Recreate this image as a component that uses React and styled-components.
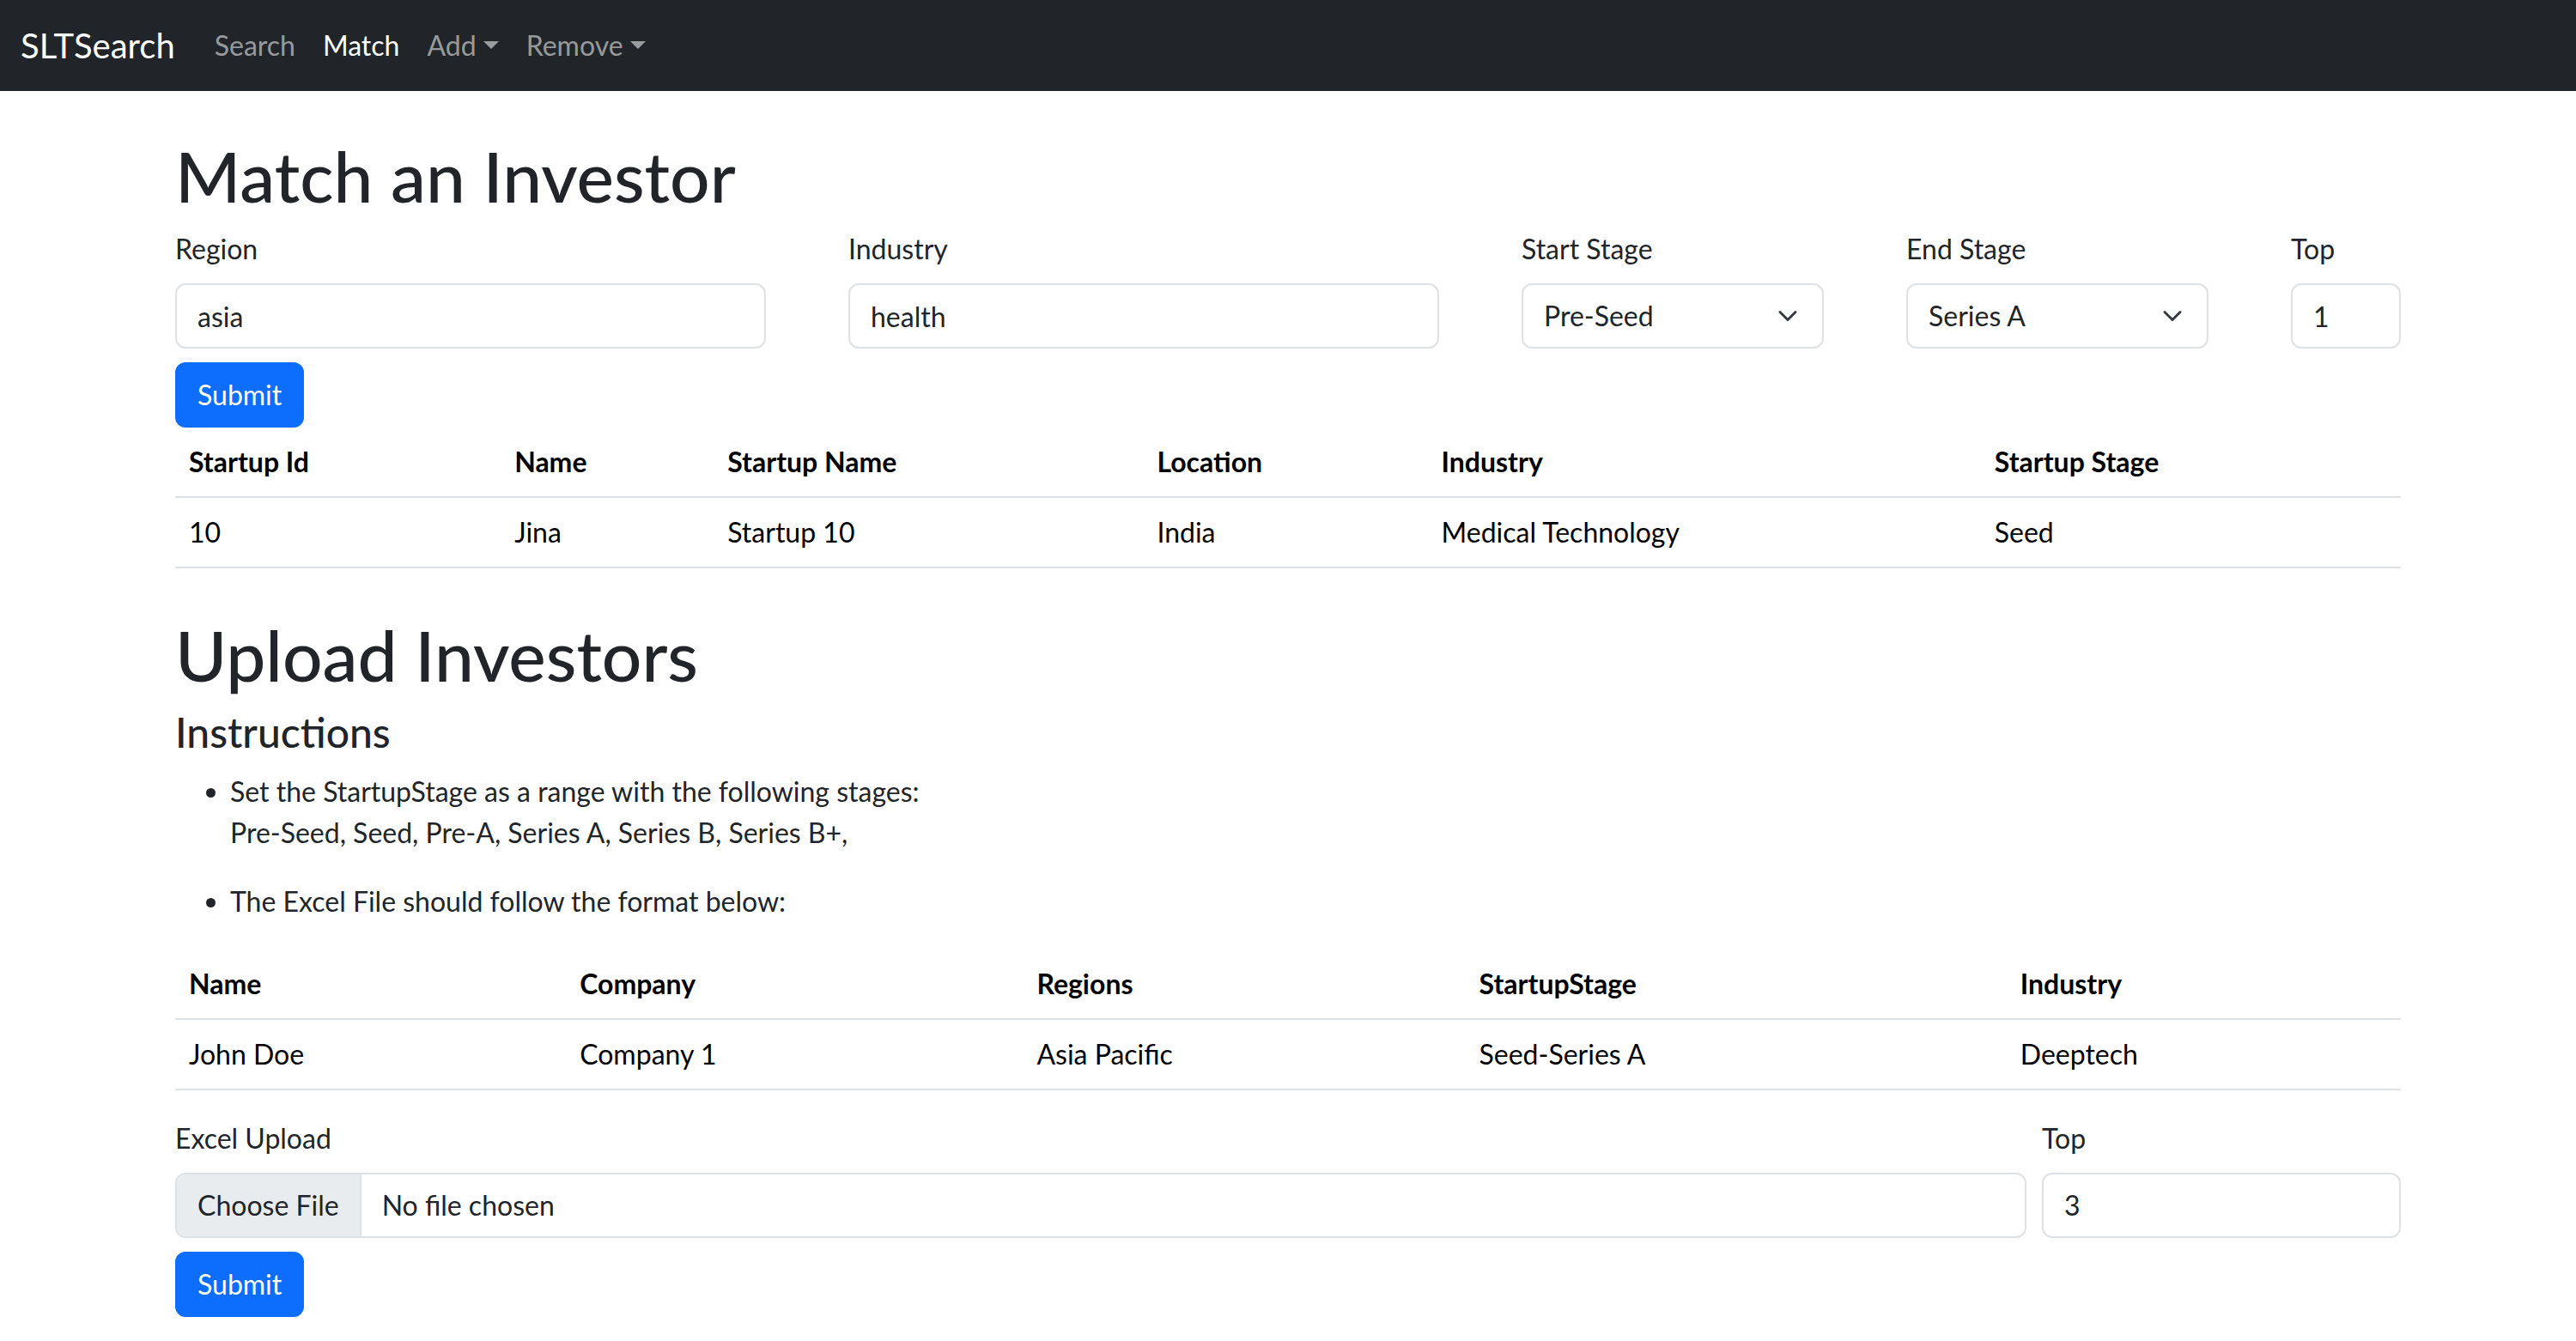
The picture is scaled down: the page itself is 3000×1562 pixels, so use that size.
import styled, { createGlobalStyle, css } from 'styled-components';

const GlobalStyle = createGlobalStyle`
  *, *::before, *::after {
    box-sizing: border-box;
  }

  body {
    margin: 0;
    font-family: Lato, 'Noto Sans', sans-serif;
    font-size: 32px;
    line-height: 1.5;
    color: #212529;
    background: #fff;
  }
`;

const Navbar = styled.nav`
  display: flex;
  align-items: center;
  height: 106px;
  padding: 0 24px;
  background: #212529;
`;

const Brand = styled.a`
  margin-right: 30px;
  font-size: 40px;
  color: #fff;
  text-decoration: none;
`;

const NavList = styled.ul`
  display: flex;
  margin: 0;
  padding: 0;
  list-style: none;
`;

const NavLink = styled.a`
  display: block;
  padding: 16px;
  color: ${(p) => (p.$active ? '#fff' : 'rgba(255, 255, 255, 0.55)')};
  text-decoration: none;

  ${(p) =>
    p.$dropdown &&
    css`
      &::after {
        content: '';
        display: inline-block;
        margin-left: 0.255em;
        vertical-align: 0.255em;
        border-top: 0.3em solid;
        border-right: 0.3em solid transparent;
        border-left: 0.3em solid transparent;
        border-bottom: 0;
      }
    `}
`;

const Container = styled.main`
  max-width: 2640px;
  margin: 0 auto;
  padding: 0 24px 64px;
`;

const Title = styled.h1`
  margin: ${(p) => p.$top}px 0 14px;
  font-size: 82px;
  font-weight: 500;
  line-height: 96px;
`;

const SubTitle = styled.h4`
  margin: 0 0 16px;
  font-size: 48px;
  font-weight: 500;
  line-height: 1.2;
`;

const FormRow = styled.div`
  display: grid;
  grid-template-columns: ${(p) => p.$cols};
  column-gap: ${(p) => p.$gap}px;
`;

const Label = styled.label`
  display: block;
  margin-bottom: 16px;
`;

const TextInput = styled.input`
  display: block;
  width: 100%;
  height: 76px;
  padding: 12px 24px;
  font: inherit;
  color: #212529;
  background: #fff;
  border: 2px solid #dee2e6;
  border-radius: 12px;
  outline: none;
`;

const SelectBox = styled.div`
  display: flex;
  align-items: center;
  height: 76px;
  padding: 0 24px;
  background: #fff;
  border: 2px solid #dee2e6;
  border-radius: 12px;
`;

const NativeSelect = styled.select`
  flex: 1;
  padding: 0;
  font: inherit;
  color: #212529;
  background: transparent;
  border: 0;
  outline: none;
  appearance: none;
`;

const SubmitButton = styled.button`
  display: inline-block;
  margin-top: 16px;
  padding: 12px 24px;
  font: inherit;
  line-height: 48px;
  color: #fff;
  background: #0d6efd;
  border: 2px solid #0d6efd;
  border-radius: 12px;
`;

const Table = styled.table`
  width: 100%;
  margin-bottom: 32px;
  table-layout: fixed;
  border-collapse: collapse;
  color: #000;
`;

const Column = styled.col`
  width: ${(p) => p.$w}px;
`;

const Th = styled.th`
  padding: 16px;
  text-align: left;
  font-weight: 700;
  border-bottom: 2px solid #dee2e6;
`;

const Td = styled.td`
  padding: 16px;
  border-bottom: 2px solid #dee2e6;
`;

const Steps = styled.ul`
  margin: 0 0 32px;
  padding-left: 64px;
`;

const StepText = styled.p`
  margin: 0 0 32px;
`;

const FileBox = styled.div`
  display: flex;
  align-items: center;
  height: 76px;
  overflow: hidden;
  background: #fff;
  border: 2px solid #dee2e6;
  border-radius: 12px;
`;

const ChooseButton = styled.span`
  display: flex;
  align-items: center;
  height: 100%;
  padding: 0 24px;
  background: #e9ecef;
  border-right: 2px solid #dee2e6;
`;

const FileName = styled.span`
  margin-left: 24px;
`;

function Chevron() {
  return (
    <svg width="32" height="24" viewBox="0 0 16 16" fill="none">
      <path
        d="m2 5 6 6 6-6"
        stroke="#343a40"
        strokeWidth="2"
        strokeLinecap="round"
        strokeLinejoin="round"
      />
    </svg>
  );
}

function StageSelect({ value }) {
  return (
    <SelectBox>
      <NativeSelect defaultValue={value}>
        {['Pre-Seed', 'Seed', 'Pre-A', 'Series A', 'Series B', 'Series B+'].map((s) => (
          <option key={s}>{s}</option>
        ))}
      </NativeSelect>
      <Chevron />
    </SelectBox>
  );
}

const matchCols = [379, 248, 500, 331, 644, 489];
const matchHeads = ['Startup Id', 'Name', 'Startup Name', 'Location', 'Industry', 'Startup Stage'];
const matchRows = [['10', 'Jina', 'Startup 10', 'India', 'Medical Technology', 'Seed']];

const formatCols = [455, 532, 515, 630, 459];
const formatHeads = ['Name', 'Company', 'Regions', 'StartupStage', 'Industry'];
const formatRows = [['John Doe', 'Company 1', 'Asia Pacific', 'Seed-Series A', 'Deeptech']];

function DataTable({ cols, heads, rows }) {
  return (
    <Table>
      <colgroup>
        {cols.map((w, i) => (
          <Column key={i} $w={w} />
        ))}
      </colgroup>
      <thead>
        <tr>
          {heads.map((h) => (
            <Th key={h}>{h}</Th>
          ))}
        </tr>
      </thead>
      <tbody>
        {rows.map((row, i) => (
          <tr key={i}>
            {row.map((cell, j) => (
              <Td key={j}>{cell}</Td>
            ))}
          </tr>
        ))}
      </tbody>
    </Table>
  );
}

export default function App() {
  return (
    <>
      <GlobalStyle />
      <Navbar>
        <Brand href="#">SLTSearch</Brand>
        <NavList>
          <li><NavLink href="#">Search</NavLink></li>
          <li><NavLink href="#" $active>Match</NavLink></li>
          <li><NavLink href="#" $dropdown>Add</NavLink></li>
          <li><NavLink href="#" $dropdown>Remove</NavLink></li>
        </NavList>
      </Navbar>

      <Container>
        <Title $top={50}>Match an Investor</Title>
        <form onSubmit={(e) => e.preventDefault()}>
          <FormRow $cols="1fr 1fr 352px 352px 128px" $gap={96}>
            <div>
              <Label>Region</Label>
              <TextInput defaultValue="asia" />
            </div>
            <div>
              <Label>Industry</Label>
              <TextInput defaultValue="health" />
            </div>
            <div>
              <Label>Start Stage</Label>
              <StageSelect value="Pre-Seed" />
            </div>
            <div>
              <Label>End Stage</Label>
              <StageSelect value="Series A" />
            </div>
            <div>
              <Label>Top</Label>
              <TextInput defaultValue="1" />
            </div>
          </FormRow>
          <SubmitButton type="submit">Submit</SubmitButton>
        </form>
        <DataTable cols={matchCols} heads={matchHeads} rows={matchRows} />

        <Title $top={52}>Upload Investors</Title>
        <SubTitle>Instructions</SubTitle>
        <Steps>
          <li>
            <StepText>
              Set the StartupStage as a range with the following stages:
              <br />
              Pre-Seed, Seed, Pre-A, Series A, Series B, Series B+,
            </StepText>
          </li>
          <li>
            <StepText>The Excel File should follow the format below:</StepText>
          </li>
        </Steps>
        <DataTable cols={formatCols} heads={formatHeads} rows={formatRows} />

        <form onSubmit={(e) => e.preventDefault()}>
          <FormRow $cols="1fr 418px" $gap={18}>
            <div>
              <Label>Excel Upload</Label>
              <FileBox>
                <ChooseButton>Choose File</ChooseButton>
                <FileName>No file chosen</FileName>
              </FileBox>
            </div>
            <div>
              <Label>Top</Label>
              <TextInput defaultValue="3" />
            </div>
          </FormRow>
          <SubmitButton type="submit">Submit</SubmitButton>
        </form>
      </Container>
    </>
  );
}
